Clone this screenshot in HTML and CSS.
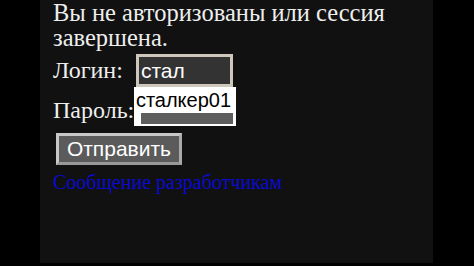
FILE: index.html
```html
<!DOCTYPE html>
<html lang="ru">
<head>
    <meta charset="UTF-8">
    <title>Вход</title>
    <link rel="stylesheet" href="styles.css">
</head>
<body>
    <div class="screen">
        <p class="title">Вы не авторизованы или сессия завершена.</p>

        <form class="login-form">
            <div class="field login-row">
                <label for="login">Логин:</label>
                <div class="input-wrap">
                    <input type="text" id="login" class="text-input" value="стал">
                    <div class="suggest">
                        <div class="suggest-item">сталкер01</div>
                        <div class="suggest-bar"></div>
                    </div>
                </div>
            </div>

            <div class="field pass-row">
                <label for="pass">Пароль:</label>
                <input type="password" id="pass" class="text-input pass-input">
            </div>

            <button type="button" class="submit">Отправить</button>
        </form>

        <a class="dev-link" href="#">Сообщение разработчикам</a>
    </div>
</body>
</html>
```

FILE: styles.css
```css
body {
    margin: 0;
    background-color: #000;
    font-family: "Liberation Serif", "Times New Roman", serif;
}

.screen {
    width: 367px;
    height: 263px;
    margin-left: 40px;
    padding: 0 13px;
    background-color: #111;
    color: #eee;
}

.title {
    margin: 0;
    font-size: 24.5px;
    line-height: 25px;
}

.login-form {
    margin: 0;
}

.field {
    display: flex;
    align-items: center;
    font-size: 24px;
    line-height: 25px;
}

.login-row {
    margin-top: 4px;
    height: 33px;
}

.login-row label {
    margin-right: 13px;
}

.input-wrap {
    position: relative;
}

.text-input {
    box-sizing: border-box;
    width: 97px;
    height: 33px;
    padding: 0 2px;
    border: 3px solid #cdc8bb;
    background-color: #333;
    color: #fff;
    font-family: "Liberation Sans", Arial, sans-serif;
    font-size: 21px;
    outline: none;
}

.suggest {
    position: absolute;
    left: -2px;
    top: 33px;
    width: 102px;
    height: 39px;
    background-color: #fff;
    z-index: 2;
}

.suggest-item {
    padding: 0 0 0 2px;
    color: #000;
    font-family: "Liberation Sans", Arial, sans-serif;
    font-size: 20px;
    line-height: 26px;
}

.suggest-bar {
    margin: 0 3px 0 7px;
    height: 11px;
    background-color: #5e5e5e;
}

.pass-row {
    height: 32px;
    margin-top: 7px;
}

.pass-input {
    width: 96px;
    height: 18px;
    margin-left: 0;
}

.submit {
    display: block;
    box-sizing: border-box;
    width: 126px;
    height: 32px;
    margin: 7px 0 0 3px;
    border: 3px solid #c8c8c8;
    border-right-color: #aaa;
    border-bottom-color: #999;
    background-color: #5b5b5b;
    color: #fff;
    font-family: "Liberation Sans", Arial, sans-serif;
    font-size: 21px;
    padding: 0;
}

.dev-link {
    display: block;
    margin-top: 5px;
    color: #0a0ad0;
    font-size: 20px;
    line-height: 24px;
    text-decoration: none;
}
```
